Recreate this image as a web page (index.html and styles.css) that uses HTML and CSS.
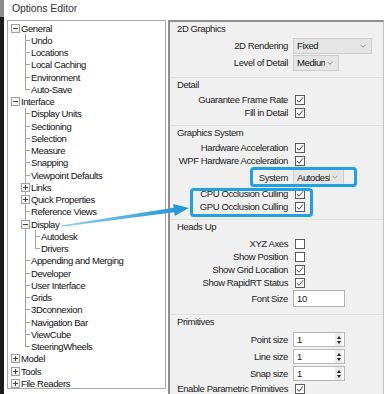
FILE: index.html
```html
<!DOCTYPE html>
<html lang="en">
<head>
  <meta charset="UTF-8">
  <meta name="viewport" content="width=device-width, initial-scale=1.0">
  <title>Options Editor</title>
  <link rel="stylesheet" href="styles.css">
</head>
<body>
  <div class="window">
    <div class="strip"></div>
    <div class="app">
      <div class="titlebar">Options Editor</div>
      <div class="panes">
        <!-- options tree -->
        <div class="tree-panel">
          <ul class="tree">
            <li>
              <div class="node"><span class="exp minus"></span>General</div>
              <ul>
                <li><div class="node"><span class="exp leaf"></span>Undo</div></li>
                <li><div class="node"><span class="exp leaf"></span>Locations</div></li>
                <li><div class="node"><span class="exp leaf"></span>Local Caching</div></li>
                <li><div class="node"><span class="exp leaf"></span>Environment</div></li>
                <li><div class="node"><span class="exp leaf"></span>Auto-Save</div></li>
              </ul>
            </li>
            <li>
              <div class="node"><span class="exp minus"></span>Interface</div>
              <ul>
                <li><div class="node"><span class="exp leaf"></span>Display Units</div></li>
                <li><div class="node"><span class="exp leaf"></span>Sectioning</div></li>
                <li><div class="node"><span class="exp leaf"></span>Selection</div></li>
                <li><div class="node"><span class="exp leaf"></span>Measure</div></li>
                <li><div class="node"><span class="exp leaf"></span>Snapping</div></li>
                <li><div class="node"><span class="exp leaf"></span>Viewpoint Defaults</div></li>
                <li><div class="node"><span class="exp plus"></span>Links</div></li>
                <li><div class="node"><span class="exp plus"></span>Quick Properties</div></li>
                <li><div class="node"><span class="exp leaf"></span>Reference Views</div></li>
                <li>
                  <div class="node"><span class="exp minus"></span>Display</div>
                  <ul>
                    <li><div class="node"><span class="exp leaf"></span>Autodesk</div></li>
                    <li><div class="node"><span class="exp leaf"></span>Drivers</div></li>
                  </ul>
                </li>
                <li><div class="node"><span class="exp leaf"></span>Appending and Merging</div></li>
                <li><div class="node"><span class="exp leaf"></span>Developer</div></li>
                <li><div class="node"><span class="exp leaf"></span>User Interface</div></li>
                <li><div class="node"><span class="exp leaf"></span>Grids</div></li>
                <li><div class="node"><span class="exp leaf"></span>3Dconnexion</div></li>
                <li><div class="node"><span class="exp leaf"></span>Navigation Bar</div></li>
                <li><div class="node"><span class="exp leaf"></span>ViewCube</div></li>
                <li><div class="node"><span class="exp leaf"></span>SteeringWheels</div></li>
              </ul>
            </li>
            <li><div class="node"><span class="exp plus"></span>Model</div></li>
            <li><div class="node"><span class="exp plus"></span>Tools</div></li>
            <li><div class="node"><span class="exp plus"></span>File Readers</div></li>
          </ul>
        </div>

        <!-- settings for the selected page -->
        <div class="settings">
          <div class="group">
            <div class="group-title">2D Graphics</div>
            <div class="row sel-row">
              <span class="label">2D Rendering</span>
              <div class="select wide"><span class="val">Fixed</span><svg class="chev" viewBox="0 0 7 4"><polyline points="0.5,0.5 3.5,3.5 6.5,0.5"/></svg></div>
            </div>
            <div class="row sel-row">
              <span class="label">Level of Detail</span>
              <div class="select mid"><span class="val">Medium</span><svg class="chev" viewBox="0 0 7 4"><polyline points="0.5,0.5 3.5,3.5 6.5,0.5"/></svg></div>
            </div>
          </div>

          <div class="group">
            <div class="group-title">Detail</div>
            <div class="row">
              <span class="label">Guarantee Frame Rate</span>
              <span class="check on"><svg viewBox="0 0 8 8"><polyline points="1,4 3,6.3 7,1.3"/></svg></span>
            </div>
            <div class="row">
              <span class="label">Fill in Detail</span>
              <span class="check on"><svg viewBox="0 0 8 8"><polyline points="1,4 3,6.3 7,1.3"/></svg></span>
            </div>
          </div>

          <div class="group">
            <div class="group-title">Graphics System</div>
            <div class="row">
              <span class="label">Hardware Acceleration</span>
              <span class="check on"><svg viewBox="0 0 8 8"><polyline points="1,4 3,6.3 7,1.3"/></svg></span>
            </div>
            <div class="row">
              <span class="label">WPF Hardware Acceleration</span>
              <span class="check on"><svg viewBox="0 0 8 8"><polyline points="1,4 3,6.3 7,1.3"/></svg></span>
            </div>
            <div class="row sys-row">
              <span class="label">System</span>
              <div class="select sys"><span class="val">Autodesk</span><svg class="chev" viewBox="0 0 7 4"><polyline points="0.5,0.5 3.5,3.5 6.5,0.5"/></svg></div>
            </div>
            <div class="row">
              <span class="label">CPU Occlusion Culling</span>
              <span class="check on"><svg viewBox="0 0 8 8"><polyline points="1,4 3,6.3 7,1.3"/></svg></span>
            </div>
            <div class="row">
              <span class="label">GPU Occlusion Culling</span>
              <span class="check on"><svg viewBox="0 0 8 8"><polyline points="1,4 3,6.3 7,1.3"/></svg></span>
            </div>
          </div>

          <div class="group heads-up">
            <div class="group-title">Heads Up</div>
            <div class="row">
              <span class="label">XYZ Axes</span>
              <span class="check"></span>
            </div>
            <div class="row">
              <span class="label">Show Position</span>
              <span class="check"></span>
            </div>
            <div class="row">
              <span class="label">Show Grid Location</span>
              <span class="check on"><svg viewBox="0 0 8 8"><polyline points="1,4 3,6.3 7,1.3"/></svg></span>
            </div>
            <div class="row">
              <span class="label">Show RapidRT Status</span>
              <span class="check on"><svg viewBox="0 0 8 8"><polyline points="1,4 3,6.3 7,1.3"/></svg></span>
            </div>
            <div class="row text-row">
              <span class="label">Font Size</span>
              <div class="textbox">10</div>
            </div>
          </div>

          <div class="group primitives">
            <div class="group-title">Primitives</div>
            <div class="row spin-row">
              <span class="label">Point size</span>
              <div class="spin"><span class="val">1</span><span class="spin-btns"><i class="up"></i><i class="down"></i></span></div>
            </div>
            <div class="row spin-row">
              <span class="label">Line size</span>
              <div class="spin"><span class="val">1</span><span class="spin-btns"><i class="up"></i><i class="down"></i></span></div>
            </div>
            <div class="row spin-row">
              <span class="label">Snap size</span>
              <div class="spin"><span class="val">1</span><span class="spin-btns"><i class="up"></i><i class="down"></i></span></div>
            </div>
            <div class="row">
              <span class="label">Enable Parametric Primitives</span>
              <span class="check on"><svg viewBox="0 0 8 8"><polyline points="1,4 3,6.3 7,1.3"/></svg></span>
            </div>
          </div>
        </div>
      </div>
    </div>

    <!-- annotation overlays -->
    <div class="callout callout-system"></div>
    <div class="callout callout-culling"></div>
    <svg class="arrow" viewBox="0 0 386 394">
      <defs>
        <linearGradient id="arrowFill" gradientUnits="userSpaceOnUse" x1="62" y1="226" x2="189" y2="208">
          <stop offset="0" stop-color="#8fd0f2"/>
          <stop offset="1" stop-color="#1b93d5"/>
        </linearGradient>
      </defs>
      <polygon fill="url(#arrowFill)" points="61.9,225.3 173.6,207.8 173.1,204.1 188.7,207.9 174.7,215.9 174.2,212.2 62.1,226.7"/>
    </svg>
  </div>
</body>
</html>
```

FILE: styles.css
```css
body {
    margin: 0;
    background: #fff;
    font-family: "Liberation Sans", Arial, sans-serif;
    font-size: 9.5px;
    letter-spacing: -0.4px;
    color: #1a1a1a;
}

.window {
    position: relative;
    display: flex;
    width: 386px;
    height: 394px;
    overflow: hidden;
    background: #fff;
}

/* edge of the window behind */
.strip {
    width: 4px;
    flex: none;
    background: linear-gradient(#8c8c8c 0 17px, #1c1c1c 17px);
}

.app {
    display: flex;
    flex-direction: column;
    width: 382px;
}

.titlebar {
    flex: none;
    height: 20px;
    line-height: 16px;
    padding-left: 8px;
    font-size: 10.5px;
    letter-spacing: -0.1px;
    color: #333;
}

.panes {
    display: flex;
    flex: none;
    height: 374px;
}

/* tree */
.tree-panel {
    box-sizing: border-box;
    width: 159px;
    height: 369px;
    margin-left: 3px;
    border: 1px solid #a9a9a9;
    background: #fff;
    overflow: hidden;
}

.tree, .tree ul {
    list-style: none;
    margin: 0;
    padding: 0;
}

.tree {
    padding: 1px 0 0 3px;
}

.tree ul {
    padding-left: 10px;
}

.tree li {
    position: relative;
}

.tree ul > li::before {
    content: "";
    position: absolute;
    left: 4px;
    top: 0;
    bottom: 0;
    border-left: 1px solid #a3a3a3;
}

.tree ul > li:last-child::before {
    bottom: auto;
    height: 6px;
}

.node {
    display: flex;
    align-items: center;
    height: 12.25px;
    white-space: nowrap;
    color: #111;
}

.exp {
    position: relative;
    flex: none;
    box-sizing: border-box;
    width: 9px;
    height: 9px;
    margin-right: 1px;
}

.exp.leaf::after {
    content: "";
    position: absolute;
    left: 4px;
    top: 4px;
    width: 5px;
    border-top: 1px solid #a3a3a3;
}

.exp.plus, .exp.minus {
    z-index: 1;
    border: 1px solid #a0a0a0;
    background: linear-gradient(#fff, #ececec);
}

.exp.plus::before, .exp.minus::before {
    content: "";
    position: absolute;
    left: 1px;
    top: 3px;
    width: 5px;
    height: 1px;
    background: #444;
}

.exp.plus::after {
    content: "";
    position: absolute;
    left: 3px;
    top: 1px;
    width: 1px;
    height: 5px;
    background: #444;
}

/* settings page */
.settings {
    box-sizing: border-box;
    width: 216px;
    height: 374px;
    margin-left: 2px;
    border-left: 2px solid #8f8f8f;
    border-top: 2px solid #8f8f8f;
    border-right: 1px solid #c4c4c4;
    background: #f0f0f0;
    overflow: hidden;
}

.group {
    padding-bottom: 6px;
    border-top: 1px solid #dfdfdf;
}

.group:first-child {
    border-top: none;
}

.group-title {
    height: 14px;
    line-height: 14px;
    padding-left: 7px;
    margin-bottom: 1px;
    color: #222;
}

.heads-up .group-title {
    margin-bottom: 3px;
}

.primitives .group-title {
    margin-bottom: 2px;
}

.row {
    display: grid;
    grid-template-columns: 118px auto;
    column-gap: 5px;
    align-items: center;
    height: 13px;
}

.sel-row, .spin-row {
    height: 17px;
}

.sys-row {
    height: 20px;
}

.text-row {
    height: 19px;
}

.label {
    text-align: right;
    white-space: nowrap;
    color: #222;
}

.check {
    width: 8px;
    height: 8px;
    margin-left: 2px;
    border: 1px solid #5a5a5a;
    background: #fff;
}

.check svg {
    display: block;
    width: 8px;
    height: 8px;
    fill: none;
    stroke: #333;
    stroke-width: 0.9;
}

.select {
    box-sizing: border-box;
    display: flex;
    align-items: center;
    height: 16px;
    padding-left: 3px;
    border: 1px solid #cdcdcd;
    background: #e5e5e5;
    overflow: hidden;
}

.select .val {
    flex: 1;
    overflow: hidden;
    white-space: nowrap;
    color: #111;
}

.select.wide { width: 79px; }
.select.mid { width: 46px; }
.select.sys { width: 51px; }

.chev {
    flex: none;
    width: 6px;
    height: 4px;
    margin: 0 5px 0 2px;
    fill: none;
    stroke: #888;
    stroke-width: 1;
}

.textbox {
    box-sizing: border-box;
    width: 52px;
    height: 17px;
    line-height: 15px;
    padding-left: 3px;
    border: 1px solid #b0b0b0;
    background: #fff;
}

.spin {
    box-sizing: border-box;
    display: flex;
    width: 52px;
    height: 15px;
    border: 1px solid #b8b8b8;
    background: #fff;
}

.spin .val {
    flex: 1;
    padding-left: 3px;
    line-height: 13px;
}

.spin-btns {
    display: flex;
    flex-direction: column;
    justify-content: center;
    gap: 2px;
    width: 7px;
    margin-right: 2px;
    background: #eaeaea;
}

.spin-btns i {
    display: block;
    margin: 0 auto;
    width: 0;
    height: 0;
    border-left: 2.5px solid transparent;
    border-right: 2.5px solid transparent;
}

.spin-btns .up { border-bottom: 3px solid #222; }
.spin-btns .down { border-top: 3px solid #222; }

/* annotation overlays */
.callout {
    position: absolute;
    box-sizing: border-box;
    border: 3px solid #24a0db;
    border-radius: 4px;
    box-shadow: 0 0 1px #8ccdf0;
}

.callout-system {
    left: 250px;
    top: 167px;
    width: 107px;
    height: 20px;
}

.callout-culling {
    left: 190px;
    top: 188px;
    width: 123px;
    height: 29px;
}

.arrow {
    position: absolute;
    left: 0;
    top: 0;
    width: 386px;
    height: 394px;
    pointer-events: none;
}
```
